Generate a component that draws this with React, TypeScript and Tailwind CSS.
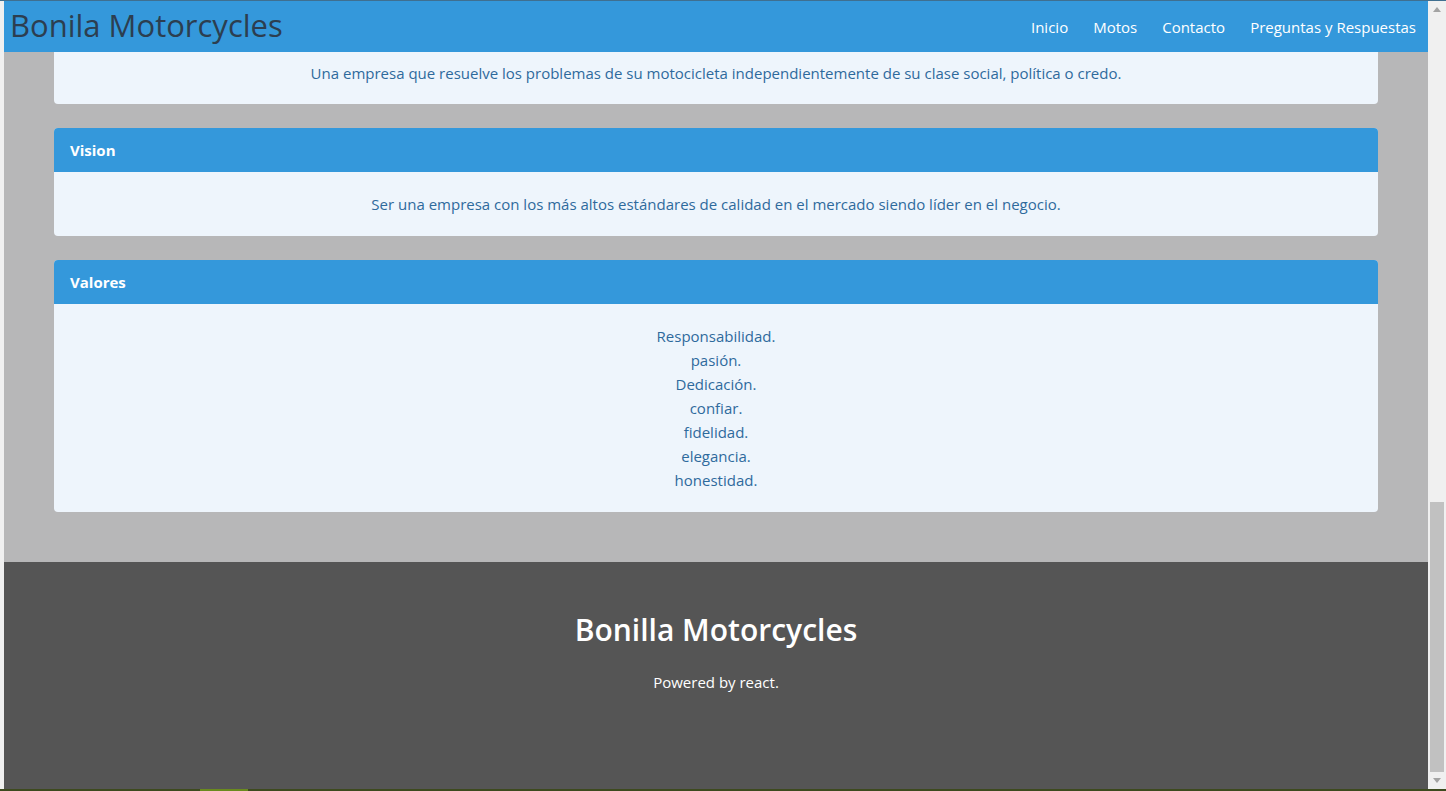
import React from "react";

const font = { fontFamily: '"Open Sans", "Noto Sans", sans-serif' };

function Card({ title, children }: { title: string; children: React.ReactNode }) {
  return (
    <div className="rounded-[4px] overflow-hidden bg-[#eef5fc]">
      <div className="h-[44px] bg-[#3498db] px-4 flex items-center text-white font-bold text-[15px]">
        {title}
      </div>
      <div className="py-5 text-center text-[#2e6a9c] text-[15px] leading-6">{children}</div>
    </div>
  );
}

export default function App() {
  const valores = [
    "Responsabilidad.",
    "pasión.",
    "Dedicación.",
    "confiar.",
    "fidelidad.",
    "elegancia.",
    "honestidad.",
  ];
  return (
    <div className="w-[1446px] h-[791px] overflow-hidden flex flex-col bg-[#f0f0f0]" style={font}>
      <div className="h-px bg-[#3f6f90] shrink-0" />
      <div className="flex flex-1 min-h-0">
        <div className="w-[4px] bg-[#f0f0f0] shrink-0" />
        <div className="flex-1 flex flex-col min-w-0">
          <nav className="h-[51px] shrink-0 bg-[#3498db] flex items-center justify-between pl-[6px] pr-[12px]">
            <div className="text-[#2c3e50] text-[31px] font-medium leading-none pb-[2px]">Bonila Motorcycles</div>
            <div className="flex items-center gap-[25px] text-white text-[15px] pt-[2px]">
              <span>Inicio</span>
              <span>Motos</span>
              <span>Contacto</span>
              <span>Preguntas y Respuestas</span>
            </div>
          </nav>
          <main className="bg-[#b7b7b8] px-[50px] pb-[50px] flex flex-col gap-6">
            <div className="rounded-b-[4px] bg-[#eef5fc] pt-[9px] pb-[19px] text-center text-[#2e6a9c] text-[15px] leading-6">
              Una empresa que resuelve los problemas de su motocicleta independientemente de su clase social, política o credo.
            </div>
            <Card title="Vision">
              Ser una empresa con los más altos estándares de calidad en el mercado siendo líder en el negocio.
            </Card>
            <Card title="Valores">
              {valores.map((v) => (
                <div key={v}>{v}</div>
              ))}
            </Card>
          </main>
          <footer className="flex-1 bg-[#555555] flex flex-col items-center pt-[48px] text-white">
            <div className="text-[30px] font-semibold leading-10">Bonilla Motorcycles</div>
            <div className="mt-[20px] text-[15px] leading-6">Powered by react.</div>
          </footer>
        </div>
        <div className="w-[18px] shrink-0 bg-[#f0f0f0] flex flex-col items-center">
          <div className="h-[17px] flex items-center justify-center">
            <svg width="8" height="5" viewBox="0 0 8 5"><path d="M0 5 L4 0 L8 5 Z" fill="#a3a3a3" /></svg>
          </div>
          <div className="flex-1 w-full flex flex-col justify-end px-[2px]">
            <div className="h-[270px] bg-[#c1c1c1]" />
          </div>
          <div className="h-[17px] flex items-center justify-center">
            <svg width="8" height="5" viewBox="0 0 8 5"><path d="M0 0 L4 5 L8 0 Z" fill="#a3a3a3" /></svg>
          </div>
        </div>
      </div>
      <div className="h-[2px] shrink-0 flex bg-[#3d4a1e]">
        <div className="w-[200px]" />
        <div className="w-[48px] bg-[#6a8a1e]" />
      </div>
    </div>
  );
}
